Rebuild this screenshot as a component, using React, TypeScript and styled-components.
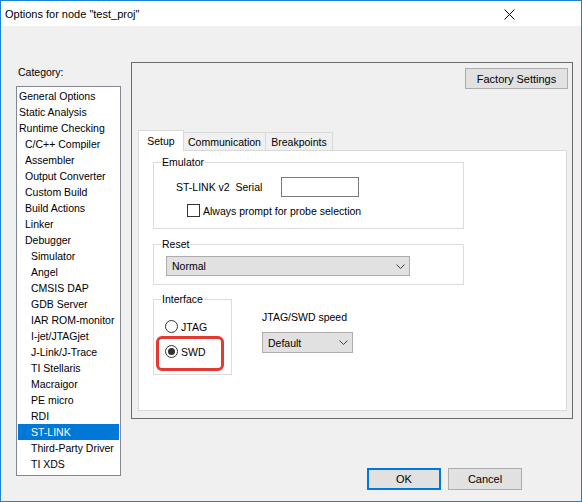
import React from "react";
import styled, { createGlobalStyle } from "styled-components";

const Global = createGlobalStyle`
  html, body { margin: 0; padding: 0; background: #f0f0f0; }
  body {
    font-family: "Liberation Sans", Arial, sans-serif;
    font-size: 10.5px;
    color: #000;
  }
  * { box-sizing: border-box; }
`;

const Window = styled.div`
  width: 582px;
  height: 502px;
  border: 1px solid #1883d7;
  display: flex;
  flex-direction: column;
  background: #f0f0f0;
`;

const TitleBar = styled.div`
  height: 25px;
  flex: none;
  background: #fff;
  display: flex;
  align-items: center;
  justify-content: space-between;
  padding-left: 4px;
  font-family: "Liberation Sans", Arial, sans-serif;
  font-size: 11px;
`;

const CloseIcon = styled.svg`
  width: 11px;
  height: 11px;
  margin-right: 66px;
  margin-top: 1px;
`;

const Client = styled.div`
  flex: 1;
  display: flex;
  flex-direction: row;
`;

const LeftCol = styled.div`
  display: flex;
  flex-direction: column;
  padding: 40px 0 0 15px;
`;

const CategoryLabel = styled.div`
  line-height: 13px;
  padding-left: 2px;
  margin-bottom: 7px;
`;

const List = styled.div`
  width: 105px;
  height: 390px;
  border: 1px solid #828790;
  background: #fff;
  padding: 1px;
`;

const Item = styled.div<{ $level: number; $selected?: boolean }>`
  height: 16px;
  line-height: 16px;
  padding-left: ${(p) => 1 + p.$level * 6}px;
  white-space: nowrap;
  background: ${(p) => (p.$selected ? "#0078d7" : "transparent")};
  color: ${(p) => (p.$selected ? "#fff" : "#000")};
`;

const RightCol = styled.div`
  display: flex;
  flex-direction: column;
  margin-left: 10px;
  padding-top: 36px;
`;

const Panel = styled.div`
  width: 442px;
  height: 357px;
  border: 1px solid #6b6b6b;
  display: flex;
  flex-direction: column;
`;

const PushButton = styled.div<{ $w: number; $h: number; $default?: boolean }>`
  width: ${(p) => p.$w}px;
  height: ${(p) => p.$h}px;
  background: #e1e1e1;
  border: ${(p) => (p.$default ? "2px solid #0078d7" : "1px solid #adadad")};
  display: flex;
  align-items: center;
  justify-content: center;
  font-size: 11px;
`;

const FactoryWrap = styled.div`
  align-self: flex-end;
  margin: 5px 4px 0 0;
`;

const TabStrip = styled.div`
  display: flex;
  align-items: flex-end;
  height: 20px;
  margin: 41px 0 0 6px;
  position: relative;
  z-index: 1;
`;

const Tab = styled.div<{ $w: number; $active?: boolean; $first?: boolean }>`
  width: ${(p) => p.$w}px;
  height: ${(p) => (p.$active ? 21 : 18)}px;
  margin-bottom: ${(p) => (p.$active ? -1 : 0)}px;
  margin-left: ${(p) => (p.$first ? 0 : -1)}px;
  border: 1px solid #d9d9d9;
  border-bottom: none;
  background: ${(p) => (p.$active ? "#fff" : "#f0f0f0")};
  display: flex;
  align-items: center;
  justify-content: center;
  padding-bottom: ${(p) => (p.$active ? 1 : 0)}px;
  white-space: nowrap;
`;

const TabPage = styled.div`
  flex: 1;
  margin: 0 5px 7px 6px;
  border: 1px solid #d9d9d9;
  background: #fff;
  padding: 11px 0 0 14px;
  display: flex;
  flex-direction: column;
`;

const Group = styled.div<{ $w: number; $h: number; $pt: number; $pl: number }>`
  position: relative;
  width: ${(p) => p.$w}px;
  height: ${(p) => p.$h}px;
  border: 1px solid #dcdcdc;
  padding: ${(p) => p.$pt}px 0 0 ${(p) => p.$pl}px;
  flex: none;
`;

const GroupLabel = styled.span`
  position: absolute;
  top: -7px;
  left: 7px;
  line-height: 13px;
  padding: 0 1px;
  background: #fff;
`;

const Row = styled.div<{ $ml?: number; $mt?: number }>`
  display: flex;
  align-items: center;
  margin-left: ${(p) => p.$ml ?? 0}px;
  margin-top: ${(p) => p.$mt ?? 0}px;
`;

const FieldLabel = styled.span`
  width: 105px;
  white-space: pre;
`;

const TextInput = styled.div`
  width: 78px;
  height: 20px;
  border: 1px solid #7a7a7a;
  background: #fff;
`;

const CheckBox = styled.div`
  width: 13px;
  height: 13px;
  border: 1px solid #333;
  background: #fff;
  margin-right: 3px;
`;

const Combo = styled.div<{ $w: number; $h: number }>`
  width: ${(p) => p.$w}px;
  height: ${(p) => p.$h}px;
  background: #e1e1e1;
  border: 1px solid #adadad;
  display: flex;
  align-items: center;
  justify-content: space-between;
  padding: 0 4px 0 5px;
`;

const Chevron = () => (
  <svg width="9" height="5" viewBox="0 0 9 5">
    <polyline points="0.5,0.5 4.5,4.5 8.5,0.5" fill="none" stroke="#404040" strokeWidth="1" />
  </svg>
);

const GroupSpacer = styled.div<{ $h: number }>`
  height: ${(p) => p.$h}px;
  flex: none;
`;

const BottomRow = styled.div`
  display: flex;
  align-items: flex-start;
`;

const RadioRow = styled.div<{ $mt?: number }>`
  display: flex;
  align-items: center;
  height: 13px;
  margin-top: ${(p) => p.$mt ?? 0}px;
`;

const RadioCircle = styled.div<{ $checked?: boolean }>`
  width: 13px;
  height: 13px;
  border-radius: 50%;
  border: 1px solid #333;
  background: #fff;
  margin-right: 3px;
  display: flex;
  align-items: center;
  justify-content: center;
  &::after {
    content: "";
    display: ${(p) => (p.$checked ? "block" : "none")};
    width: 7px;
    height: 7px;
    border-radius: 50%;
    background: #333;
  }
`;

const Highlight = styled.div`
  position: absolute;
  left: 2px;
  top: 36px;
  width: 68px;
  height: 35px;
  border: 3.5px solid #e23a30;
  border-radius: 6px;
  pointer-events: none;
`;

const SpeedCol = styled.div`
  margin: 12px 0 0 30px;
  display: flex;
  flex-direction: column;
`;

const SpeedLabel = styled.div`
  line-height: 13px;
  margin-bottom: 8px;
`;

const ButtonRow = styled.div`
  display: flex;
  justify-content: flex-end;
  gap: 7px;
  margin-top: 49px;
  padding-right: 51px;
`;

const items: [string, number][] = [
  ["General Options", 0],
  ["Static Analysis", 0],
  ["Runtime Checking", 0],
  ["C/C++ Compiler", 1],
  ["Assembler", 1],
  ["Output Converter", 1],
  ["Custom Build", 1],
  ["Build Actions", 1],
  ["Linker", 1],
  ["Debugger", 1],
  ["Simulator", 2],
  ["Angel", 2],
  ["CMSIS DAP", 2],
  ["GDB Server", 2],
  ["IAR ROM-monitor", 2],
  ["I-jet/JTAGjet", 2],
  ["J-Link/J-Trace", 2],
  ["TI Stellaris", 2],
  ["Macraigor", 2],
  ["PE micro", 2],
  ["RDI", 2],
  ["ST-LINK", 2],
  ["Third-Party Driver", 2],
  ["TI XDS", 2],
];

export default function App() {
  return (
    <>
      <Global />
      <Window>
        <TitleBar>
          <span>Options for node "test_proj"</span>
          <CloseIcon viewBox="0 0 11 11">
            <line x1="0.5" y1="0.5" x2="10.5" y2="10.5" stroke="#000" strokeWidth="1" />
            <line x1="10.5" y1="0.5" x2="0.5" y2="10.5" stroke="#000" strokeWidth="1" />
          </CloseIcon>
        </TitleBar>
        <Client>
          <LeftCol>
            <CategoryLabel>Category:</CategoryLabel>
            <List>
              {items.map(([name, level]) => (
                <Item key={name} $level={level} $selected={name === "ST-LINK"}>
                  {name}
                </Item>
              ))}
            </List>
          </LeftCol>
          <RightCol>
            <Panel>
              <FactoryWrap>
                <PushButton $w={103} $h={21}>Factory Settings</PushButton>
              </FactoryWrap>
              <TabStrip>
                <Tab $w={46} $active $first>Setup</Tab>
                <Tab $w={83}>Communication</Tab>
                <Tab $w={68}>Breakpoints</Tab>
              </TabStrip>
              <TabPage>
                <Group $w={311} $h={67} $pt={14} $pl={22}>
                  <GroupLabel>Emulator</GroupLabel>
                  <Row>
                    <FieldLabel>ST-LINK v2  Serial</FieldLabel>
                    <TextInput />
                  </Row>
                  <Row $ml={11} $mt={7}>
                    <CheckBox />
                    <span>Always prompt for probe selection</span>
                  </Row>
                </Group>
                <GroupSpacer $h={15} />
                <Group $w={311} $h={41} $pt={11} $pl={12}>
                  <GroupLabel>Reset</GroupLabel>
                  <Combo $w={244} $h={20}>
                    <span>Normal</span>
                    <Chevron />
                  </Combo>
                </Group>
                <GroupSpacer $h={14} />
                <BottomRow>
                  <Group $w={79} $h={76} $pt={20} $pl={11}>
                    <GroupLabel>Interface</GroupLabel>
                    <RadioRow>
                      <RadioCircle />
                      <span>JTAG</span>
                    </RadioRow>
                    <RadioRow $mt={12}>
                      <RadioCircle $checked />
                      <span>SWD</span>
                    </RadioRow>
                    <Highlight />
                  </Group>
                  <SpeedCol>
                    <SpeedLabel>JTAG/SWD speed</SpeedLabel>
                    <Combo $w={91} $h={21}>
                      <span>Default</span>
                      <Chevron />
                    </Combo>
                  </SpeedCol>
                </BottomRow>
              </TabPage>
            </Panel>
            <ButtonRow>
              <PushButton $w={74} $h={22} $default>OK</PushButton>
              <PushButton $w={74} $h={22}>Cancel</PushButton>
            </ButtonRow>
          </RightCol>
        </Client>
      </Window>
    </>
  );
}
